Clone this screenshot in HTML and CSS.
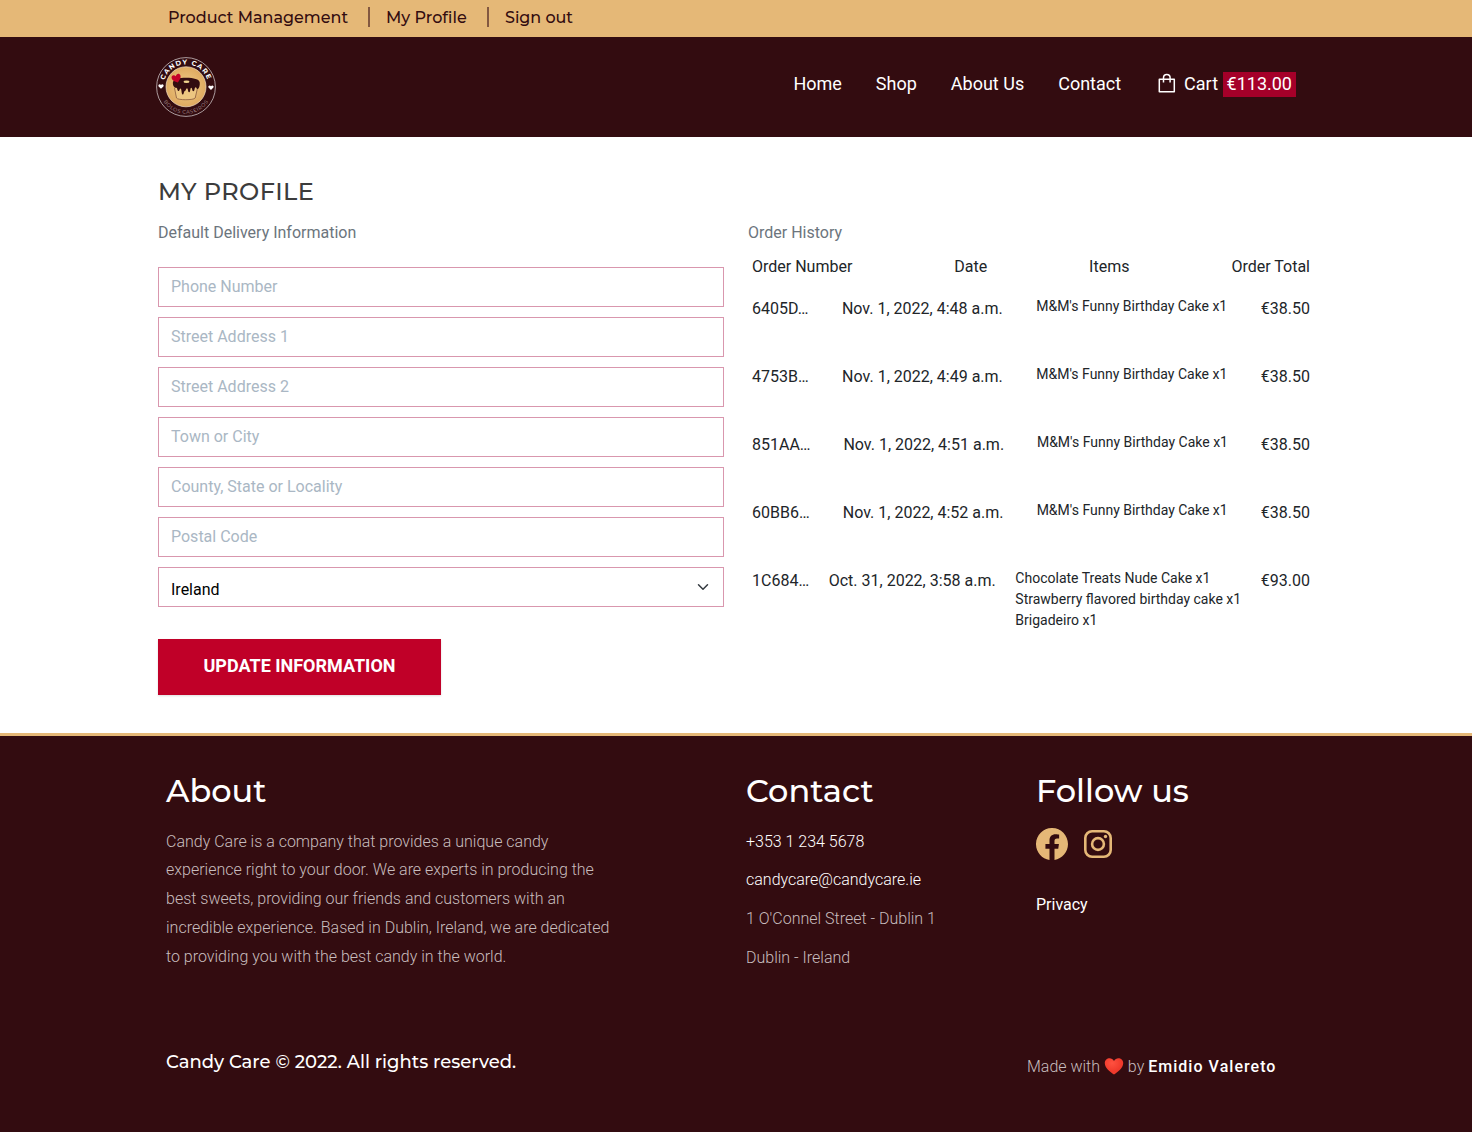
FILE: index.html
```html
<!DOCTYPE html>
<html lang="en">
<head>
<meta charset="utf-8">
<title>Candy Care - My Profile</title>
<link rel="stylesheet" href="styles.css">
</head>
<body>
<div class="topbar">
  <nav class="account">
    <a class="t1">Product Management</a><i class="bar"></i><a class="t2">My Profile</a><i class="bar"></i><a class="t3">Sign out</a>
  </nav>
</div>
<header class="header">
  <svg class="logo" viewBox="0 0 60 60" width="60" height="60">
    <defs>
      <radialGradient id="gold"><stop offset="0" stop-color="#f0cd88"/><stop offset="1" stop-color="#dfaa60"/></radialGradient>
      <path id="arcTop" d="M7.500 29.800A22.500 22.500 0 0 1 52.500 29.800"/>
      <path id="arcBottom" d="M3.300 30A26.700 26.700 0 0 0 56.700 30"/>
    </defs>
    <circle cx="30" cy="30" r="29.400" fill="none" stroke="#c9bfc0" stroke-width=".8"/>
    <circle cx="30" cy="29.800" r="20" fill="url(#gold)" stroke="#f3dfc4" stroke-width=".7"/>
    <text class="logo-name"><textPath href="#arcTop" startOffset="50%" text-anchor="middle">CANDY CARE</textPath></text>
    <text class="logo-sub"><textPath href="#arcBottom" startOffset="50%" text-anchor="middle">BOLOS CASEIROS</textPath></text>
    <path d="M5 31.800l-2.400-2.400c-1-1.700 1.300-3.100 2.400-1.400 1.100-1.700 3.500-.3 2.400 1.400zM55 33l-2.500-2.400c-1-1.700 1.400-3.100 2.500-1.400 1.100-1.700 3.500-.3 2.400 1.400z" fill="#fff"/>
    <path d="M18.500 31l2 10c1 2.300 17.500 2.300 18.700 0L41.500 31" fill="#edc681" stroke="#7b4b35" stroke-width=".7"/>
    <path d="M17 25c1-3 6-4.300 13-4.300 8 0 13.200 1.500 13.700 4.500.4 2.400-.4 5.800-1.800 6.800-1.400.5-1.200-1.700-2.300-1.700-1.300 0-.7 4-2.200 4-1.400 0-1-3.500-2.200-3.500s-.5 4.500-2 4.500-1-4-2.200-4-.9 2.600-2.100 2.600-.9 3.700-2.200 3.700c-1.500 0-.8-6-2.200-6-1.200 0-.6 2.500-1.900 2.500-1.500 0-1-3.300-2.300-3.300C17.500 30.800 16.500 27 17 25z" fill="#330c10"/>
    <ellipse cx="30.500" cy="24.800" rx="3" ry="1.200" fill="#f0d58e"/>
    <path d="M0 4.800C-2.500 3-4.800 1-4.600-1.300-4.400-4-1.200-4.300 0-1.800 1.200-4.300 4.400-4 4.600-1.300 4.800 1 2.500 3 0 4.800z" transform="translate(20.400 21) rotate(-18)" fill="#c40028"/>
  </svg>
  <nav class="menu">
    <a>Home</a><a>Shop</a><a>About Us</a><a>Contact</a>
    <a class="cart"><svg width="20" height="20" viewBox="0 0 20 20"><path d="M2.300 6.300h15v12.400h-15zM6.500 9.500V4.800a3.300 3.300 0 0 1 6.600 0V9.500" fill="none" stroke="currentColor" stroke-width="1.500" stroke-linejoin="round"/></svg><span>Cart</span><b>€113.00</b></a>
  </nav>
</header>
<main class="main">
  <h1>MY PROFILE</h1>
  <div class="columns">
    <section>
      <p class="muted">Default Delivery Information</p>
      <form class="form">
        <input placeholder="Phone Number"><input placeholder="Street Address 1"><input placeholder="Street Address 2"><input placeholder="Town or City"><input placeholder="County, State or Locality"><input placeholder="Postal Code">
        <div class="select"><span>Ireland</span><svg width="12" height="12" viewBox="0 0 16 16"><path d="M2 5l6 6 6-6" fill="none" stroke="#343a40" stroke-width="2" stroke-linecap="round" stroke-linejoin="round"/></svg></div>
        <button type="button">UPDATE INFORMATION</button>
      </form>
    </section>
    <section>
      <p class="muted">Order History</p>
      <div class="orders">
        <div class="row head"><span>Order Number</span><span>Date</span><span>Items</span><span>Order Total</span></div>
        <div class="row"><span>6405D…</span><span>Nov. 1, 2022, 4:48 a.m.</span><small>M&amp;M's Funny Birthday Cake x1</small><span>€38.50</span></div>
        <div class="row"><span>4753B…</span><span>Nov. 1, 2022, 4:49 a.m.</span><small>M&amp;M's Funny Birthday Cake x1</small><span>€38.50</span></div>
        <div class="row"><span>851AA…</span><span>Nov. 1, 2022, 4:51 a.m.</span><small>M&amp;M's Funny Birthday Cake x1</small><span>€38.50</span></div>
        <div class="row"><span>60BB6…</span><span>Nov. 1, 2022, 4:52 a.m.</span><small>M&amp;M's Funny Birthday Cake x1</small><span>€38.50</span></div>
        <div class="row"><span>1C684…</span><span>Oct. 31, 2022, 3:58 a.m.</span><small>Chocolate Treats Nude Cake x1<br>Strawberry flavored birthday cake x1<br>Brigadeiro x1</small><span>€93.00</span></div>
      </div>
    </section>
  </div>
</main>
<footer class="footer">
  <div class="foot-grid">
    <section><h2>About</h2>
      <p class="about">Candy Care is a company that provides a unique candy<br>experience right to your door. We are experts in producing the<br>best sweets, providing our friends and customers with an<br>incredible experience. Based in Dublin, Ireland, we are dedicated<br>to providing you with the best candy in the world.</p></section>
    <section><h2>Contact</h2>
      <ul class="contact"><li class="link">+353 1 234 5678</li><li class="link">candycare@candycare.ie</li><li>1 O'Connel Street - Dublin 1</li><li>Dublin - Ireland</li></ul></section>
    <section><h2>Follow us</h2>
      <div class="social">
        <svg width="32" height="32" viewBox="0 0 16 16" fill="currentColor"><path d="M16 8.049c0-4.446-3.582-8.050-8-8.050C3.580 0-.002 3.603-.002 8.050c0 4.017 2.926 7.347 6.750 7.951v-5.625h-2.030V8.050H6.750V6.275c0-2.017 1.195-3.131 3.022-3.131.876 0 1.791.157 1.791.157v1.980h-1.009c-.993 0-1.303.621-1.303 1.258v1.510h2.218l-.354 2.326H9.250V16c3.824-.604 6.750-3.934 6.750-7.951z"/></svg>
        <svg width="28" height="28" viewBox="0 0 28 28" fill="none" stroke="currentColor"><rect x="1.300" y="1.300" width="25.400" height="25.400" rx="6.800" stroke-width="2.600"/><circle cx="14" cy="14" r="5.900" stroke-width="2.600"/><circle cx="21.500" cy="6.500" r="1.700" fill="currentColor" stroke="none"/></svg>
      </div>
      <a class="privacy">Privacy</a></section>
  </div>
  <div class="foot-bottom">
    <p class="copy">Candy Care © 2022. All rights reserved.</p>
    <p class="made">Made with <svg width="20" height="18" viewBox="0 0 20 18"><defs><radialGradient id="heart" cx=".4" cy=".3"><stop offset="0" stop-color="#ff5140"/><stop offset="1" stop-color="#f03a2c"/></radialGradient></defs><path d="M10 17.500C6 15 1 11 .8 6.300.5 1 7.500-.8 10 4c2.500-4.800 9.500-3 9.200 2.300C19 11 14 15 10 17.500z" fill="url(#heart)"/></svg> by <strong>Emidio Valereto</strong></p>
  </div>
</footer>
</body>
</html>
```
FILE: styles.css
```css
* { box-sizing: border-box; }
body { margin: 0; background: #fff; color: #212529; font: 400 16px/24px Roboto, "Noto Sans", sans-serif; }
h1, h2, p, ul { margin: 0; padding: 0; font-weight: 400; }
.topbar { height: 37px; background: #e5b877; padding: 6px 168px 0; }
.account { display: flex; align-items: flex-start; color: #330c10; font: 500 16px/24px Montserrat, Inter, sans-serif; white-space: nowrap; }
.t1 { width: 200px; }
.t2 { width: 101px; margin-left: 16px; }
.t3 { margin-left: 16px; letter-spacing: -.05px; }
.bar { width: 2px; height: 20px; margin-top: 1px; background: #835840; }
.header { height: 100px; background: #330c10; display: flex; justify-content: space-between; align-items: flex-start; padding: 20px 176px 0 156px; }
.menu { display: flex; gap: 34px; color: #fff; font-size: 18px; line-height: 25px; padding-top: 14px; }
.cart { display: flex; padding-left: 2px; }
.cart svg { margin: 2px 7px 0 0; }
.cart b { font-weight: 400; background: #a50029; height: 25px; margin: 1px 0 0 4.500px; padding: 0 4px; line-height: 23px; }
.logo-name { font: 700 6.800px Montserrat, sans-serif; letter-spacing: 1px; fill: #fff; }
.logo-sub { font: 400 5px Montserrat, sans-serif; letter-spacing: .55px; fill: #b39b9d; }
.main { height: 596px; padding: 40px 158px 0; }
h1 { font: 500 24px/30px Montserrat, Inter, sans-serif; letter-spacing: .4px; color: #3c3c3c; }
.columns { display: grid; grid-template-columns: 566px 566px; gap: 24px; padding-top: 14px; }
.muted { color: #6c757d; }
.form { display: flex; flex-direction: column; gap: 10px; padding-top: 22px; }
.form input, .select { height: 40px; width: 100%; border: 1px solid #d997ae; border-radius: 0; padding: 0 12px 2px; font: inherit; color: #000; background: #fff; }
.form input::placeholder { color: #aab7c4; opacity: 1; }
.select { display: flex; justify-content: space-between; align-items: center; padding: 0 14px 0 12px; }
.select span { padding-top: 5px; }
.form button { width: 283px; height: 56px; margin-top: 22px; border: 0; background: #c00028; color: #fff; font: 700 18px/24px Roboto, sans-serif; padding: 0 0 2px; box-shadow: 0 1px 2px #0002; }
.orders { padding: 10px 4px 0; }
.row { display: flex; justify-content: space-between; min-height: 68px; white-space: nowrap; }
.row.head { min-height: 42px; }
.row small { font-size: 14px; line-height: 21px; margin-top: -1px; }
.footer { height: 399px; background: #330c10; border-top: 3px solid #e5b877; color: #fff; padding: 35px 166px 0; }
.foot-grid { display: grid; grid-template-columns: 580px 290px 1fr; height: 278px; }
h2 { font: 500 32px/40px Montserrat, Inter, sans-serif; }
.about { margin-top: 16.500px; line-height: 28.800px; font-weight: 300; color: #c8bdbe; white-space: nowrap; }
.contact { list-style: none; margin-top: 16.500px; line-height: 28.800px; font-weight: 300; color: #c8bdbe; }
.contact li { margin-bottom: 10px; }
.contact .link { color: #fff; }
.social { display: flex; align-items: center; gap: 16px; color: #e5b877; margin: 17px 0 33px; }
.foot-bottom { display: flex; justify-content: space-between; padding-right: 29.500px; }
.copy { font: 500 18px/26px Montserrat, Inter, sans-serif; }
.made { padding-top: 6px; font-weight: 300; color: #c8bdbe; }
.made svg { vertical-align: -3px; }
.made strong { color: #fff; font-weight: 500; letter-spacing: 1.040px; }
```
